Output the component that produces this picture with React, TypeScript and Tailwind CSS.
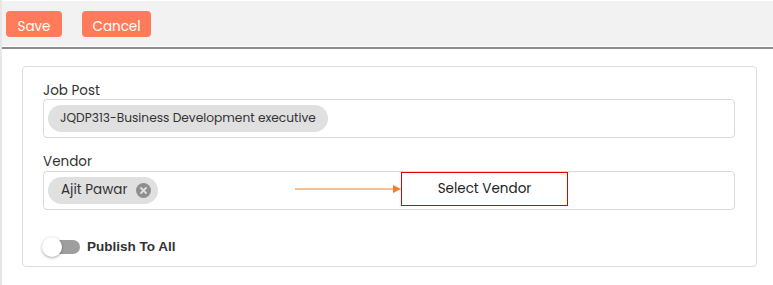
import React from "react";

export default function App() {
  const font = { fontFamily: "Poppins, 'Open Sans', 'Noto Sans', sans-serif" };
  return (
    <div className="relative w-[773px] h-[285px] bg-white border-l-2 border-[#e6e6e6] overflow-hidden" style={font}>
      <div className="pt-px">
        <div className="h-[45px] bg-[#f2f2f2] flex items-start pt-[10px] pl-[4px] gap-[20px]">
          <button className="h-[26px] w-[56px] rounded-[4px] bg-[#ff7b5a] text-white text-[13.5px] leading-[16px] flex items-center justify-center pt-[5px]">Save</button>
          <button className="h-[26px] w-[69px] rounded-[4px] bg-[#ff7b5a] text-white text-[13.5px] leading-[16px] flex items-center justify-center pt-[5px]">Cancel</button>
        </div>
        <div className="h-px bg-white" />
        <div className="h-[2px] bg-[#8c8c8c]" />
      </div>
      <div className="ml-[20px] mt-[17px] w-[735px] h-[201px] border border-[#dddddd] rounded-[4px] pl-[20px] pr-[21px] pt-[11px]">
        <div className="text-[13.5px] leading-[21px] pt-[2px] text-[#333]">Job Post</div>
        <div className="mt-[-2px] h-[39px] border border-[#d9d9d9] rounded-[4px] flex items-center pl-[4px]">
          <span className="h-[27px] rounded-full bg-[#e0e0e0] px-[12px] flex items-center text-[12.2px] text-[#333]">JQDP313-Business Development executive</span>
        </div>
        <div className="mt-[12px] text-[13.5px] leading-[21px] pt-[1px] text-[#333]">Vendor</div>
        <div className="relative mt-[-1px] h-[39px] border border-[#d9d9d9] rounded-[4px] flex items-center pl-[4px]">
          <span className="h-[27px] rounded-full bg-[#e0e0e0] pl-[13px] pr-[7px] flex items-center gap-[9px] text-[13.5px] text-[#333]">
            Ajit Pawar
            <svg width="15" height="15" viewBox="0 0 15 15">
              <circle cx="7.5" cy="7.5" r="7.5" fill="#8f8f8f" />
              <path d="M5 5L10 10M10 5L5 10" stroke="#e0e0e0" strokeWidth="1.8" strokeLinecap="round" />
            </svg>
          </span>
          <svg className="absolute left-[251px] top-[11px]" width="108" height="12" viewBox="0 0 108 12">
            <line x1="0" y1="6" x2="100" y2="6" stroke="#ef7f2c" strokeWidth="1.2" />
            <path d="M98 2L106 6L98 10Z" fill="#ef7f2c" />
          </svg>
          <div className="absolute left-[357px] top-0 w-[167px] h-[34px] border border-[#e00000] bg-white flex items-center justify-center text-[13.5px] text-[#222]">
            Select Vendor
          </div>
        </div>
        <div className="mt-[27px] flex items-center gap-[7px]">
          <div className="relative w-[36px] h-[14px] rounded-full bg-[#9e9e9e] ml-[1px]">
            <div className="absolute left-[-2px] top-[-3px] w-[20px] h-[20px] rounded-full bg-white shadow-[0_1px_3px_rgba(0,0,0,0.35)]" />
          </div>
          <span className="text-[13.5px] font-bold text-[#333]" style={{ fontFamily: "'Liberation Sans', Arial, sans-serif" }}>Publish To All</span>
        </div>
      </div>
    </div>
  );
}
